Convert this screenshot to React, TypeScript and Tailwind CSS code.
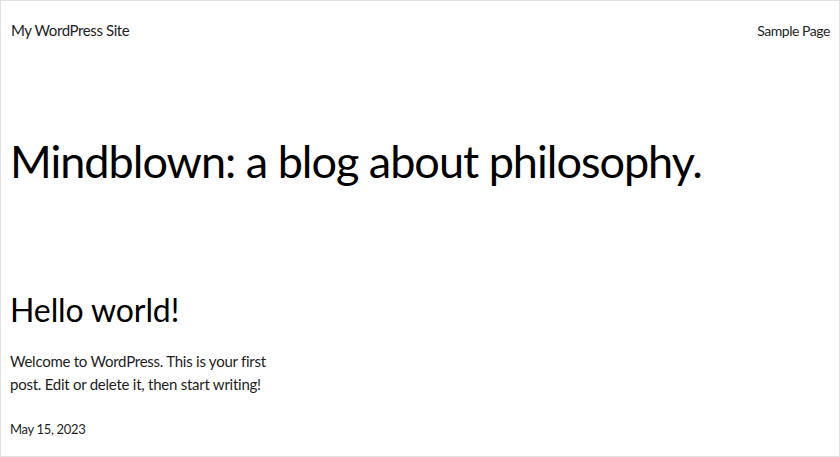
import React from "react";

export default function App() {
  return (
    <div
      className="w-[840px] h-[457px] bg-white border border-[#e2e2e2] overflow-hidden flex flex-col text-black"
      style={{ fontFamily: "Lato, 'Open Sans', sans-serif" }}
    >
      <header className="h-[59px] flex items-center justify-between pl-[10px] pr-[9px] text-[15px] text-[#1e1e1e]">
        <span className="tracking-[-0.4px]">My WordPress Site</span>
        <span className="text-[14px] tracking-[-0.45px]">Sample Page</span>
      </header>
      <h1 className="mt-[74px] pl-[9px] text-[45px] leading-[54px] font-normal tracking-[-1px]">
        Mindblown: a blog about philosophy.
      </h1>
      <h2 className="mt-[102px] pl-[9px] text-[32px] leading-[40px] font-normal tracking-[-0.1px]">
        Hello world!
      </h2>
      <p className="mt-[20px] pl-[9px] text-[15px] leading-[23px] text-[#1e1e1e] tracking-[-0.25px]">
        Welcome to WordPress. This is your first
        <br />
        post. Edit or delete it, then start writing!
      </p>
      <p className="mt-[24px] pl-[9px] text-[13px] leading-[18px] text-[#1e1e1e] tracking-[-0.33px]">
        May 15, 2023
      </p>
    </div>
  );
}
